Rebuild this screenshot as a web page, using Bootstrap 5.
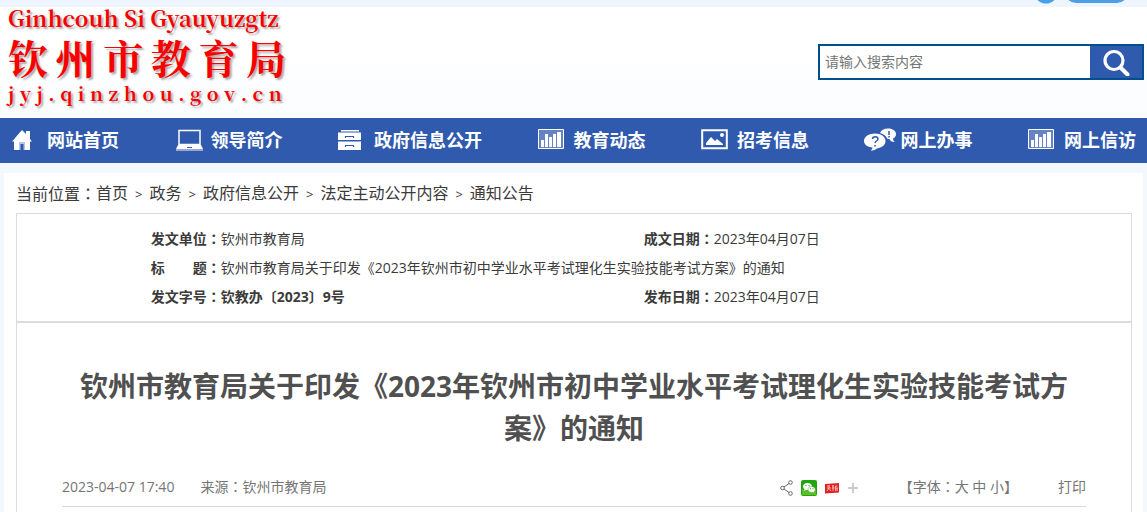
<!DOCTYPE html>
<html lang="zh-CN">
<head>
<meta charset="utf-8">
<meta name="viewport" content="width=device-width, initial-scale=1">
<title>钦州市教育局</title>
<link rel="stylesheet" href="https://cdn.jsdelivr.net/npm/bootstrap@5.3.0/dist/css/bootstrap.min.css">
<style>
  body { font-family: "Open Sans", "Noto Sans CJK SC", sans-serif; font-size: 14px; line-height: 29px; color: #3b3b3b; background: #f3f8ff; overflow-x: hidden; }
  a { color: inherit; text-decoration: none; }
  .mid { font-family: "Noto Sans CJK TC", sans-serif; font-feature-settings: "locl" 0; }
  .top-strip { height: 7px; background: #eff5fe; overflow: hidden; padding-right: 18px; }
  .site-head { background: linear-gradient(#fff 40%, #fafcff); height: 111px; padding: 0 3px 0 8px; }
  .logo { color: #f80000; font-family: "Noto Serif CJK SC", "Liberation Serif", serif; font-weight: 700; text-shadow: 2px 2px 2px #aaa; }
  .logo-latin { font-size: 22px; line-height: 22px; }
  .logo-name { font-size: 40px; line-height: 54px; width: 278px; padding-top: 1px; }
  .logo-url { font-size: 19px; line-height: 18px; width: 274px; }
  .search { width: 326px; height: 36px; margin-top: 37px; border: 2px solid #00508f; }
  .search input { padding: 0 5px 2px; font-size: 14px; border: 0; min-width: 0; }
  .search input::placeholder { color: #757575; opacity: 1; }
  .search button { width: 52px; background: #2f5aae; border: 0; border-radius: 0; padding: 0; }
  .main-nav { background: #2f5aae; min-height: 45px; padding: 0 11px; color: #fff; font-size: 18px; font-weight: 700; }
  .main-nav a { line-height: 45px; }
  .nav-ico { width: 36px; }
  .nav-ico svg { display: block; overflow: visible; margin-bottom: 2px; }
  .sheet { background: #fff; margin: 10px 4px 0; padding: 5px 11px 0 12px; }
  .crumbs { font-size: 16px; line-height: 30px; margin-bottom: 4px; }
  .crumbs li + li::before { content: ">"; font-size: 13px; padding: 0 7px; }
  .doc { border: 1px solid #dcdcdc; border-bottom: 0; }
  .doc-info { border-bottom: 2px solid #dcdcdc; padding: 10px 0 10px 12%; }
  .doc-info table { width: 100%; }
  .doc-info td { padding: 0; }
  .doc-info .first { width: 50%; }
  .doc-info .second { padding-left: 3px; }
  .article { padding: 42px 45px 0; }
  .article h1 { font-size: 28px; line-height: 42px; font-weight: 700; color: #505050; margin-bottom: 20px; }
  .meta { color: #757575; border-bottom: 1px solid #d8d8d8; padding: 3px 0 5px; }
  .meta button { border: 0; padding: 0; background: none; color: inherit; }
  .source { margin-left: 26px; }
  .share { gap: 8px; padding-top: 2px; }
  .sizes { margin-left: 36px; }
  .print { margin-left: 40px; }
</style>
</head>
<body class="d-flex flex-column min-vh-100">
<div class="top-strip d-flex justify-content-end align-items-end">
  <svg width="100" height="7" viewBox="0 0 100 7" fill="#4ba0e5"><circle cx="17" cy="-8" r="11.500"/><rect x="36" y="-22" width="63" height="25" rx="11"/></svg>
</div>
<header class="site-head d-flex justify-content-between align-items-start">
  <a href="#" class="logo d-block">
    <div class="logo-latin">Ginhcouh Si Gyauyuzgtz</div>
    <div class="logo-name d-flex justify-content-between"><span>钦</span><span>州</span><span>市</span><span>教</span><span>育</span><span>局</span></div>
    <div class="logo-url d-flex justify-content-between"><span>j</span><span>y</span><span>j</span><span>.</span><span>q</span><span>i</span><span>n</span><span>z</span><span>h</span><span>o</span><span>u</span><span>.</span><span>g</span><span>o</span><span>v</span><span>.</span><span>c</span><span>n</span></div>
  </a>
  <form class="search d-flex bg-white">
    <input class="flex-grow-1" type="search" placeholder="请输入搜索内容" aria-label="请输入搜索内容">
    <button class="btn d-flex align-items-center justify-content-center" type="button" aria-label="搜索">
      <svg width="28" height="28" viewBox="0 0 28 28" fill="none" stroke="#fff"><circle cx="12" cy="12.500" r="9" stroke-width="3.200"/><path d="M18.500 19.500l7 7" stroke-width="4" stroke-linecap="round"/></svg>
    </button>
  </form>
</header>
<nav class="main-nav d-flex flex-wrap justify-content-between">
  <a href="#" class="d-flex align-items-center"><span class="nav-ico"><svg width="22" height="22" viewBox="0 0 22 22"><path fill="#fff" d="M1 12.500L11 1l4 4V2h4v8l2 2.500h-2V21h-5v-7H8v7H3v-8.500z"/><path fill="#b9c7e4" d="M8 13h6v8H8z"/><path fill="#2f5aae" d="M9.500 15h3v6h-3z"/></svg></span>网站首页</a>
  <a href="#" class="d-flex align-items-center"><span class="nav-ico"><svg width="28" height="22" viewBox="0 0 28 22"><path d="M4 1.500h21v14H4z" fill="none" stroke="#fff" stroke-width="1.500"/><path fill="#fff" d="M3 16h23l2 4H1z"/><path fill="#94a9d5" d="M1 20h27v2H1z"/><path fill="#2f5aae" d="M12 18h5v1h-5z"/></svg></span>领导简介</a>
  <a href="#" class="d-flex align-items-center"><span class="nav-ico"><svg width="24" height="22" viewBox="0 0 24 22"><path fill="#fff" d="M3 1h18v1.500H3zM0 3.500h23V11H0zM0 12.500h23V21H0z"/><path d="M7.500 9V7.500h8V9M7.500 18v-1.500h8V18" fill="none" stroke="#2f5aae" stroke-width="1.200"/></svg></span>政府信息公开</a>
  <a href="#" class="d-flex align-items-center"><span class="nav-ico"><svg width="27" height="21" viewBox="0 0 27 21"><path d="M.500.500h25v19h-25z" fill="#6483c3" stroke="#fff"/><path fill="#fff" d="M3 11h3v7H3zM7 5h3v13H7zM11 8h3v10h-3zM15 5h3v13h-3zM19 3h4v15h-4z"/></svg></span>教育动态</a>
  <a href="#" class="d-flex align-items-center"><span class="nav-ico"><svg width="27" height="21" viewBox="0 0 27 21"><path d="M1.200 1.200h24.600v18H1.200z" fill="none" stroke="#fff" stroke-width="2"/><path fill="#fff" d="M5 16v-2l5-6 4 4 2-2 6 5v1z"/><circle cx="21" cy="6" r="2" fill="#fff"/></svg></span>招考信息</a>
  <a href="#" class="d-flex align-items-center"><span class="nav-ico"><svg width="33" height="23" viewBox="1 0 33 23"><path fill="#fff" d="M16 5c1-3 4-4.500 8-4.500 5 0 8 2.500 8 5.500 0 2-1 3.500-3 4.500 0 2 1 3 2 3.500-3 0-5-1-5.500-3h-2C22 8 20 6 16 5z"/><path fill="#fff" d="M11 5.500c6 0 10.500 3 10.500 7.500S17 20 12.500 20.500c-1 1.500-3 2-6 2 1.500-1 2-2 2-3C3.500 19 0 16.500 0 13c0-4.500 5-7.500 11-7.500z"/><path d="M8.500 11c0-3 5.500-3 5.500 0 0 2-3 2-3 4M11 17v1.500M25 3v4M25 8v1.500" fill="none" stroke="#2f5aae" stroke-width="1.500"/></svg></span>网上办事</a>
  <a href="#" class="d-flex align-items-center"><span class="nav-ico"><svg width="27" height="21" viewBox="0 0 27 21"><path d="M.500.500h25v19h-25z" fill="#6483c3" stroke="#fff"/><path fill="#fff" d="M3 11h3v7H3zM7 5h3v13H7zM11 8h3v10h-3zM15 5h3v13h-3zM19 3h4v15h-4z"/></svg></span>网上信访</a>
</nav>
<main class="sheet flex-grow-1 d-flex flex-column">
  <div class="crumbs d-flex flex-wrap">
    <span>当前位置<span class="mid">：</span></span>
    <ol class="list-unstyled d-flex flex-wrap mb-0">
      <li><a href="#">首页</a></li><li><a href="#">政务</a></li><li><a href="#">政府信息公开</a></li><li><a href="#">法定主动公开内容</a></li><li><a href="#">通知公告</a></li>
    </ol>
  </div>
  <div class="doc flex-grow-1">
    <div class="doc-info">
      <table>
        <tr><td class="first"><b>发文单位<span class="mid">：</span></b>钦州市教育局</td><td class="second"><b>成文日期<span class="mid">：</span></b>2023年04月07日</td></tr>
        <tr><td colspan="2"><b>标　　题<span class="mid">：</span></b>钦州市教育局关于印发《2023年钦州市初中学业水平考试理化生实验技能考试方案》的通知</td></tr>
        <tr><td class="first"><b>发文字号<span class="mid">：</span>钦教办〔2023〕9号</b></td><td class="second"><b>发布日期<span class="mid">：</span></b>2023年04月07日</td></tr>
      </table>
    </div>
    <article class="article">
      <h1 class="text-center">钦州市教育局关于印发《2023年钦州市初中学业水平考试理化生实验技能考试方案》的通知</h1>
      <div class="meta d-flex flex-wrap align-items-center">
        <span>2023-04-07 17:40</span>
        <span class="source">来源<span class="mid">：</span>钦州市教育局</span>
        <div class="share d-flex align-items-center ms-auto">
          <button type="button" class="d-flex" aria-label="分享"><svg width="13" height="16" viewBox="0 0 13 16" fill="none" stroke="#666"><circle cx="2.500" cy="8" r="1.800"/><circle cx="10.500" cy="2.500" r="1.800"/><circle cx="10.500" cy="13.500" r="1.800"/><path d="M4 7l5-3.500M4 9l5 3.500"/></svg></button>
          <button type="button" class="d-flex" aria-label="微信"><svg width="16" height="16" viewBox="0 0 16 16"><rect width="16" height="16" rx="2" fill="#23a30e"/><path d="M1 15V9c5 3 10 3 14-1v7z" fill="#5cbd25"/><path d="M6.500 3C3.800 3 2 4.600 2 6.600c0 1.200.6 2 1.500 2.700L3 11l1.800-1c.5.200 1 .2 1.600.200C9 10 11 8.500 11 6.500S9 3 6.500 3z" fill="#fff"/><path d="M10.500 6.500C8.300 6.500 7 7.800 7 9.500s1.500 3 3.500 3l1.500-.200 1.300.900-.300-1.400c.8-.6 1.200-1.300 1.200-2.300 0-1.700-1.600-3-3.700-3z" fill="#fff" stroke="#3aa615" stroke-width=".5"/><path d="M4.500 5.500h1M7.500 5.500h1M9 8.800h1M11.500 8.800h1" stroke="#23a30e"/></svg></button>
          <button type="button" class="d-flex" aria-label="头条"><svg width="14" height="16" viewBox="0 0 14 16"><path d="M0 4l14-1v9.500L0 13.500z" fill="#e3211f"/><path d="M2 6h3M2 8h4M4 5v3l-2 3M4.500 9l1.500 2M7 6h2M7 8h2.500M8 5v6M10.500 6h2M10.500 6v5M10.500 8h2.500M12 8v3" fill="none" stroke="#ffd6d4" stroke-width=".8"/></svg></button>
          <button type="button" class="d-flex" aria-label="更多"><svg width="16" height="16" viewBox="0 0 16 16"><path d="M6 3v10M1 8h10" stroke="#ccc" stroke-width="2"/></svg></button>
        </div>
        <span class="sizes">【字体<span class="mid">：</span><button type="button">大</button> <button type="button">中</button> <button type="button">小</button>】</span>
        <button type="button" class="print">打印</button>
      </div>
    </article>
  </div>
</main>
<script src="https://cdn.jsdelivr.net/npm/bootstrap@5.3.0/dist/js/bootstrap.bundle.min.js"></script>
</body>
</html>
